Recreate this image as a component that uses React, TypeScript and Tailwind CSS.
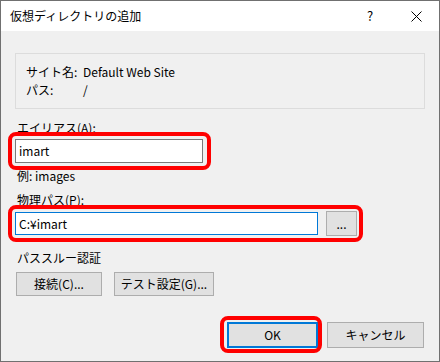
import React from 'react';

const font = { fontFamily: '"Noto Sans CJK JP", "Noto Sans", sans-serif' };

function RedMark({ className }: { className: string }) {
  return <div className={`pointer-events-none absolute border-4 border-[#ff0000] rounded-[8px] ${className}`} />;
}

function WinButton({ label, className }: { label: string; className: string }) {
  return (
    <button className={`flex items-center justify-center border border-[#adadad] bg-[#e1e1e1] text-[12px] leading-[16px] text-black ${className}`}>
      {label}
    </button>
  );
}

export default function App() {
  return (
    <div style={font} className="w-[440px] h-[362px] flex flex-col border border-[#707070] bg-[#f0f0f0] text-black overflow-hidden">
      {/* title bar */}
      <div className="h-[30px] bg-white flex items-center">
        <div className="pl-[9px] flex-1 text-[12px] leading-[16px]">仮想ディレクトリの追加</div>
        <div className="w-[46px] h-full flex items-center justify-center text-[13px]">?</div>
        <div className="w-[46px] h-full flex items-center justify-center">
          <svg width="11" height="11" viewBox="0 0 11 11">
            <path d="M0.5 0.5 L10.5 10.5 M10.5 0.5 L0.5 10.5" stroke="#000" strokeWidth="1" />
          </svg>
        </div>
      </div>

      <div className="flex flex-col px-[14px] text-[12px] leading-[16px]">
        {/* site info */}
        <div className="mt-[22px] h-[56px] border border-[#dcdcdc] pl-[10px] pt-[9px]">
          <div className="flex h-[18px] items-center">
            <span className="w-[57px]">サイト名:</span>
            <span>Default Web Site</span>
          </div>
          <div className="flex h-[18px] items-center">
            <span className="w-[57px]">パス:</span>
            <span>/</span>
          </div>
        </div>

        <div className="mt-[11px] pl-[2px]">エイリアス(A):</div>
        <div className="relative mt-[3px] w-[188px]">
          <div className="h-[24px] border border-[#7a7a7a] bg-white flex items-center pl-[3px]">imart</div>
          <RedMark className="-left-[7px] -right-[8px] -top-[7px] -bottom-[7px]" />
        </div>

        <div className="mt-[5px] pl-[2px]">例: images</div>

        <div className="mt-[8px] pl-[2px]">物理パス(P):</div>
        <div className="relative mt-[3px] w-[342px] h-[25px] flex items-center">
          <div className="w-[303px] h-[23px] border border-[#0078d7] bg-white flex items-center pl-[3px]">C:¥imart</div>
          <WinButton label="..." className="ml-[8px] w-[31px] h-[25px]" />
          <RedMark className="-left-[7px] -right-[6px] -top-[6px] -bottom-[6px]" />
        </div>

        <div className="mt-[14px] pl-[2px]">パススルー認証</div>
        <div className="mt-[6px] flex pl-[1px]">
          <WinButton label="接続(C)..." className="w-[86px] h-[24px]" />
          <WinButton label="テスト設定(G)..." className="ml-[12px] w-[100px] h-[24px]" />
        </div>

        <div className="mt-[26px] flex justify-end pr-[1px]">
          <div className="relative">
            <button className="w-[91px] h-[26px] border-2 border-[#0078d7] bg-[#e1e1e1] flex items-center justify-center text-[12px]">
              OK
            </button>
            <RedMark className="-left-[7px] -right-[4px] -top-[6px] -bottom-[5px]" />
          </div>
          <WinButton label="キャンセル" className="ml-[9px] w-[97px] h-[26px]" />
        </div>
      </div>
    </div>
  );
}
